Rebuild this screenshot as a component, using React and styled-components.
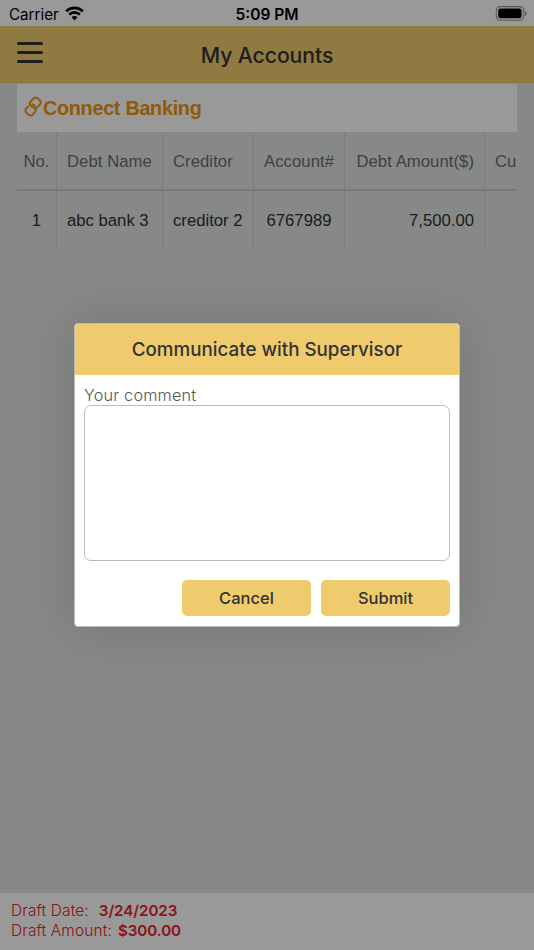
import styled, { createGlobalStyle } from "styled-components"
import { React } from "react"

const columns = [
    { title: "No.", width: 40, align: "center", value: "1", pad: 0 },
    { title: "Debt Name", width: 106, align: "left", value: "abc bank 3", pad: 10 },
    { title: "Creditor", width: 91, align: "left", value: "creditor 2", pad: 10 },
    { title: "Account#", width: 91, align: "center", value: "6767989", pad: 0 },
    { title: "Debt Amount($)", width: 140, align: "right", value: "7,500.00", pad: 10 },
    { title: "Cu", width: 160, align: "left", value: "", pad: 10 },
]

export default function App() {
    return (
        <Screen>
            <GlobalStyle />
            <StatusBar>
                <Carrier>
                    <CarrierName>Carrier</CarrierName>
                    <WifiIcon />
                </Carrier>
                <Clock>5:09 PM</Clock>
                <BatterySlot>
                    <BatteryIcon />
                </BatterySlot>
            </StatusBar>
            <Header>
                <MenuButton aria-label="Menu">
                    <MenuLine />
                    <MenuLine />
                    <MenuLine />
                </MenuButton>
                <Title>My Accounts</Title>
            </Header>
            <Content>
                <ConnectBanking>
                    <LinkIcon />
                    <ConnectText>Connect Banking</ConnectText>
                </ConnectBanking>
                <Table>
                    <HeadRow>
                        {columns.map((col, index) => (
                            <HeadCell key={index} $width={col.width} $align={col.align} $pad={col.pad}>
                                {col.title}
                            </HeadCell>
                        ))}
                    </HeadRow>
                    <Row>
                        {columns.map((col, index) => (
                            <Cell key={index} $width={col.width} $align={col.align} $pad={col.pad}>
                                {col.value}
                            </Cell>
                        ))}
                    </Row>
                </Table>
            </Content>
            <Footer>
                <DraftLine $gap={10}>
                    <DraftLabel>Draft Date:</DraftLabel>
                    <DraftValue>3/24/2023</DraftValue>
                </DraftLine>
                <DraftLine $gap={6}>
                    <DraftLabel>Draft Amount:</DraftLabel>
                    <DraftValue>$300.00</DraftValue>
                </DraftLine>
            </Footer>

            <Overlay>
                <Dialog>
                    <DialogTitle>Communicate with Supervisor</DialogTitle>
                    <DialogBody>
                        <Label htmlFor="comment">Your comment</Label>
                        <Comment id="comment" />
                        <Actions>
                            <Button>Cancel</Button>
                            <Button>Submit</Button>
                        </Actions>
                    </DialogBody>
                </Dialog>
            </Overlay>
        </Screen>
    )
}

function WifiIcon() {
    return (
        <svg width="19" height="15" viewBox="0 0 20 15" fill="none" stroke="#000" strokeWidth="2.9">
            <path d="M1.2 5.2a12.5 12.5 0 0 1 17.6 0" />
            <path d="M4.4 8.7a8 8 0 0 1 11.2 0" />
            <path d="M10 14.8L6.9 11.4a4.7 4.7 0 0 1 6.2 0z" fill="#000" stroke="none" />
        </svg>
    )
}

function BatteryIcon() {
    return (
        <svg width="32" height="15" viewBox="0 0 32 15">
            <rect x="1.3" y="0.6" width="27.4" height="13.6" rx="4" fill="none" stroke="#000" strokeOpacity="0.45" strokeWidth="1.1" />
            <rect x="3.2" y="2.5" width="23.4" height="9.8" rx="2.2" fill="#000" />
            <path d="M30.2 5v5c1-.5 1.4-1.4 1.4-2.5S31.2 5.5 30.2 5z" fill="#000" fillOpacity="0.45" />
        </svg>
    )
}

function LinkIcon() {
    return (
        <svg width="19" height="21" viewBox="0 0 19 21" fill="none" stroke="#f0960a" strokeWidth="2" strokeLinecap="round" strokeLinejoin="round">
            <path d="M11.3 11.9C12.600 11.900 13.500 11.200 14.200 10.400L16 8.300C17.200 6.800 17.100 5.300 15.600 4L13.600 2.300C12.100 1.100 10.600 1.200 9.300 2.700L6.300 6.200C5.300 7.500 5.500 8.700 6.700 9.700L10.800 12.400C12 13.300 12.200 14.400 11.300 15.600L8.900 18.300C7.600 19.800 6.100 19.900 4.600 18.700L2.600 17C1.100 15.700 1 14.200 2.200 12.700L4 10.600" />
            <path d="M8.600 8.200L10.600 9.600" />
        </svg>
    )
}

const GlobalStyle = createGlobalStyle`
* {
box-sizing: border-box;
}
body {
margin: 0;
font-family: Inter, "Liberation Sans", sans-serif;
}
`

const Screen = styled.div`
width: 534px;
height: 950px;
display: flex;
flex-direction: column;
background: #e1e5e3;
overflow: hidden;
`

const StatusBar = styled.div`
height: 26px;
display: grid;
grid-template-columns: 1fr auto 1fr;
align-items: center;
padding: 0 7px 0 9px;
background: #fff;
color: #000;
`

const Carrier = styled.div`
display: flex;
align-items: center;
gap: 6px;
`

const CarrierName = styled.span`
padding-top: 2px;
font-size: 15.2px;
`

const Clock = styled.span`
padding-top: 2px;
margin-right: 2px;
font-size: 15.5px;
font-weight: 600;
`

const BatterySlot = styled.div`
display: flex;
justify-content: flex-end;
`

const Header = styled.div`
height: 57px;
display: grid;
grid-template-columns: 26px 1fr 26px;
align-items: center;
padding: 0 17px;
background: #efcb6e;
border-bottom: 1px solid #e2c16c;
`

const MenuButton = styled.button`
width: 26px;
display: flex;
flex-direction: column;
gap: 6px;
padding: 0;
margin-bottom: 3px;
border: none;
background: none;
`

const MenuLine = styled.span`
width: 26px;
height: 3px;
border-radius: 2px;
background: #333;
`

const Title = styled.h1`
margin: 0;
padding-top: 1px;
text-align: center;
font-size: 21.2px;
letter-spacing: -0.08px;
font-weight: 500;
color: #333;
`

const Content = styled.div`
flex: 1;
margin: 0 17px;
overflow: hidden;
`

const ConnectBanking = styled.div`
height: 49px;
display: flex;
align-items: center;
padding-left: 7px;
background: #fff;
border-top: 1px solid #eee;

svg {
margin-bottom: 3px;
}
`

const ConnectText = styled.span`
font-family: "Liberation Sans", Arial, sans-serif;
font-size: 19.8px;
letter-spacing: -0.28px;
font-weight: bold;
color: #f0960a;
`

const Table = styled.div`
width: 628px;
font-family: "Liberation Sans", Arial, sans-serif;
font-size: 16.7px;
`

const HeadRow = styled.div`
height: 59px;
display: flex;
border-bottom: 2px solid #c6c9c8;
color: #6b6b6b;
`

const Row = styled.div`
height: 58px;
display: flex;
border-bottom: 1px solid #dadddc;
color: #303030;
`

const Cell = styled.div`
width: ${props => props.$width}px;
flex-shrink: 0;
display: flex;
align-items: center;
justify-content: ${props => props.$align === "center" ? "center" : props.$align === "right" ? "flex-end" : "flex-start"};
padding: 2px ${props => props.$pad}px 0;
border-right: 1px solid #cbcecd;
white-space: nowrap;
`

const HeadCell = styled(Cell)`
letter-spacing: 0.05px;
`

const Footer = styled.div`
height: 57px;
padding: 7px 11px;
background: #fff;
color: #e8232a;
`

const DraftLine = styled.div`
height: 20px;
display: flex;
align-items: center;
gap: ${props => props.$gap}px;
font-size: 15.5px;
`

const DraftLabel = styled.span`
font-weight: 300;
letter-spacing: 0.1px;
`

const DraftValue = styled.span`
font-size: 15.2px;
font-weight: 600;
letter-spacing: -0.07px;
`

const Overlay = styled.div`
position: absolute;
inset: 0;
display: flex;
align-items: center;
justify-content: center;
background: rgba(0, 0, 0, 0.4);
`

const Dialog = styled.div`
width: 386px;
height: 304px;
display: flex;
flex-direction: column;
border: 1px solid #bbb;
border-radius: 4px;
overflow: hidden;
background: #fff;
box-shadow: 0 0 50px rgba(0, 0, 0, 0.15);
`

const DialogTitle = styled.div`
height: 51px;
display: flex;
align-items: center;
justify-content: center;
background: #efcb6e;
color: #333;
font-size: 18.8px;
font-weight: 500;
`

const DialogBody = styled.div`
flex: 1;
display: flex;
flex-direction: column;
padding: 10px 9px;
`

const Label = styled.label`
height: 20px;
line-height: 20px;
font-size: 16.3px;
letter-spacing: 0.17px;
font-weight: 300;
color: #555;
`

const Comment = styled.textarea`
width: 100%;
height: 156px;
border: 1px solid #bbb;
border-radius: 7px;
background: #fff;
resize: none;
outline: none;
`

const Actions = styled.div`
display: flex;
justify-content: flex-end;
gap: 10px;
margin-top: 19px;
`

const Button = styled.button`
width: 129px;
height: 36px;
border: none;
border-radius: 5px;
background: #efcb6e;
color: #333;
font-family: Inter, "Liberation Sans", sans-serif;
font-size: 16.5px;
font-weight: 500;
`
